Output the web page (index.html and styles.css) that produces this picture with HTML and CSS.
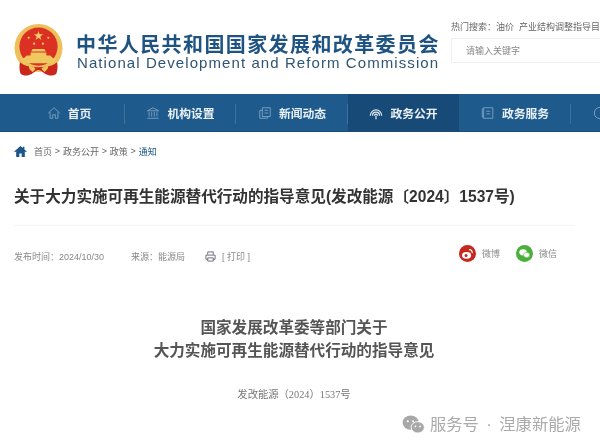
FILE: index.html
```html
<!DOCTYPE html>
<html lang="zh">
<head>
<meta charset="utf-8">
<title>关于大力实施可再生能源替代行动的指导意见</title>
<link rel="stylesheet" href="styles.css">
</head>
<body>
<div class="page">
	<header class="top">
		<svg class="emblem" viewBox="0 0 50 54">
			<circle cx="25" cy="24.500" r="24.500" fill="#edc05c"/>
			<circle cx="25" cy="23" r="19.500" fill="#db3022"/>
			<polygon points="25,7 26.100,10.500 29.800,10.500 26.800,12.700 27.900,16.200 25,14.100 22.100,16.200 23.200,12.700 20.200,10.500 23.900,10.500" fill="#f3cf6b"/>
			<circle cx="15" cy="14" r="1.100" fill="#f3cf6b"/>
			<circle cx="35" cy="14" r="1.100" fill="#f3cf6b"/>
			<circle cx="20.500" cy="20" r="1.100" fill="#f3cf6b"/>
			<circle cx="29.500" cy="20" r="1.100" fill="#f3cf6b"/>
			<path d="M19 25.500h12l1.500 2.500h-15zM17 29h16v3H17zM13 32h24l3 3H10zM7 35h36l-2 5H9z" fill="#f0c860"/>
			<path d="M6 39c-1 6 0 10 1 12 5 3 8 1 11 0 3-2 5-4 7-4s4 2 7 4c3 1 6 3 11 0 1-2 2-6 1-12-4 3-7 5-19 5S10 42 6 39z" fill="#c9271c"/>
			<path d="M15 42c3 2 6 1 7 4l-3 3c-2-2-4-3-4-7zM35 42c-3 2-6 1-7 4l3 3c2-2 4-3 4-7z" fill="#efc35c"/>
		</svg>
		<div class="brand">
			<div class="brand-cn">中华人民共和国国家发展和改革委员会</div>
			<div class="brand-en">National Development and Reform Commission</div>
		</div>
		<div class="search">
			<div class="hot">热门搜索：油价&nbsp; 产业结构调整指导目</div>
			<div class="search-box">请输入关键字</div>
		</div>
	</header>

	<nav class="nav">
		<a class="nav-item home">
			<svg viewBox="0 0 16 16"><path d="M1.500 8 8 2l6.500 6M3.500 7v7h3v-4h3v4h3V7"/></svg>首页
		</a>
		<a class="nav-item org">
			<svg viewBox="0 0 16 16"><path d="M1.500 5.500 8 2l6.500 3.500zM3.500 7v5M6.500 7v5M9.500 7v5M12.500 7v5M1.500 14h13"/></svg>机构设置
		</a>
		<a class="nav-item news">
			<svg viewBox="0 0 16 16"><path d="M5 2h9v10H5zM5 5H2v9h9v-2M7.500 5h4M7.500 8h4"/></svg>新闻动态
		</a>
		<a class="nav-item open active">
			<svg viewBox="0 0 16 16"><path d="M1.500 11a6.500 6.500 0 1 1 13 0M4 11a4 4 0 1 1 8 0M6.300 11a1.700 1.700 0 1 1 3.400 0M8 11v4"/></svg>政务公开
		</a>
		<a class="nav-item service">
			<svg viewBox="0 0 16 16"><path d="M3 2h10.500v12H3zM3 2 1.500 3.500v9L3 14M6 6h4.500M6 9h4.500"/></svg>政务服务
		</a>
		<a class="nav-item last">
			<svg viewBox="0 0 16 16"><circle cx="8" cy="8" r="6.500"/></svg>
		</a>
	</nav>

	<div class="crumbs">
		<svg class="crumb-home" viewBox="0 0 16 14"><path d="M8 0 0 7l1 1 1.500-1.300V14h4V9.500h3V14h4V6.700L15 8l1-1-3-2.600V1h-2v1.600z"/></svg>
		<span>首页</span><i>&gt;</i><span>政务公开</span><i>&gt;</i><span>政策</span><i>&gt;</i><span class="here">通知</span>
	</div>

	<h1 class="headline">关于大力实施可再生能源替代行动的指导意见(发改能源〔2024〕1537号)</h1>

	<div class="meta">
		<span class="date">发布时间：2024/10/30</span>
		<span class="source">来源：能源局</span>
		<span class="print">
			<svg viewBox="0 0 12 12"><path d="M3 4V1h6v3M1 9V4.500h10V9H9M3 7.500h6V11H3zM1 9h2"/></svg>
			[ 打印 ]
		</span>
		<span class="share">
			<span class="share-item">
				<svg class="round weibo" viewBox="0 0 18 18"><circle cx="9" cy="9" r="9"/><ellipse cx="8" cy="11" rx="4.800" ry="3.500" fill="#fff"/><circle cx="7.500" cy="11" r="1.600"/><path d="M10.500 5a3 3 0 0 1 3.500 3.500" fill="none" stroke="#fff" stroke-width="1.200"/></svg>微博
			</span>
			<span class="share-item">
				<svg class="round wechat" viewBox="0 0 18 18"><circle cx="9" cy="9" r="9"/><ellipse cx="7.500" cy="7.800" rx="4" ry="3.300" fill="#fff"/><ellipse cx="11.300" cy="10.500" rx="3.300" ry="2.700" fill="#fff" stroke="#4cae3c" stroke-width=".6"/></svg>微信
			</span>
		</span>
	</div>

	<article class="doc">
		<h2>国家发展改革委等部门关于<br>大力实施可再生能源替代行动的指导意见</h2>
		<p class="doc-no">发改能源（2024）1537号</p>
	</article>

	<div class="mark">
		<svg viewBox="0 0 24 20"><ellipse cx="9" cy="8" rx="8.500" ry="7.500"/><ellipse cx="16.500" cy="13" rx="7" ry="6" stroke="#fff"/><circle cx="6" cy="6.500" r="1.100" fill="#fff"/><circle cx="11.500" cy="6.500" r="1.100" fill="#fff"/><circle cx="14" cy="12" r=".9" fill="#fff"/><circle cx="19" cy="12" r=".9" fill="#fff"/></svg>
		<span class="mark-text">服务号 · 涅康新能源</span>
	</div>
</div>
</body>
</html>
```

FILE: styles.css
```css
html,body{
	margin:0;
	padding:0;
	background:#fff;
	overflow:hidden;
}
body{
	font-family:"Liberation Sans", "Noto Sans CJK SC", sans-serif;
	color:#333;
}
.page{
	position:relative;
	width:600px;
	height:448px;
	overflow:hidden;
	filter:blur(.4px);
}
.top{
	display:flex;
	height:94px;
	padding-left:14px;
}
.emblem{
	width:49px;
	height:53px;
	margin-top:24px;
	flex:none;
}
.brand{
	width:364px;
	margin:35px 0 0 13px;
	flex:none;
}
.brand-cn{
	font-size:20px;
	line-height:20px;
	letter-spacing:1.400px;
	font-weight:bold;
	color:#1f5482;
	white-space:nowrap;
}
.brand-en{
	font-size:15px;
	line-height:12px;
	letter-spacing:1.080px;
	margin-top:2px;
	margin-left:1px;
	color:#2f5474;
	white-space:nowrap;
}
.search{
	margin:20px 0 0 11px;
	flex:none;
	width:149px;
}
.hot{
	font-size:9px;
	line-height:14px;
	color:#666;
	white-space:nowrap;
}
.search-box{
	margin-top:4px;
	height:25px;
	line-height:25px;
	padding-left:14px;
	border:1px solid #eee;
	border-right:0;
	border-radius:2px 0 0 2px;
	box-sizing:border-box;
	font-size:9px;
	color:#888;
}
.nav{
	display:flex;
	height:38px;
	background:#1f5a8c;
	border-bottom:1px solid #1a4c78;
	box-sizing:border-box;
}
.nav-item{
	display:flex;
	align-items:center;
	justify-content:center;
	gap:7px;
	flex:none;
	width:111px;
	height:100%;
	font-size:11.800px;
	font-weight:bold;
	color:#e9f0f6;
	position:relative;
}
.nav-item svg{
	width:14px;
	height:14px;
	fill:none;
	stroke:#7fa6c8;
	stroke-width:1;
}
.nav-item::after{
	content:"";
	position:absolute;
	right:0;
	top:10px;
	height:20px;
	width:1px;
	background:#3f719c;
}
.home{
	width:125px;
	padding-left:13px;
	box-sizing:border-box;
}
.news{
	width:112px;
}
.active{
	background:#174a77;
}
.active svg{
	stroke:#dfe8ef;
	stroke-width:1.400;
}
.active::after{
	display:none;
}
.service{
	width:112px;
}
.last{
	width:29px;
	justify-content:flex-start;
	padding-left:22px;
}
.last::after{
	display:none;
}
.crumbs{
	display:flex;
	align-items:center;
	height:14px;
	margin:12px 0 0 14px;
	font-size:9px;
	color:#666;
}
.crumb-home{
	width:13px;
	height:11px;
	fill:#1c5587;
	margin-right:7px;
}
.crumbs i{
	font-style:normal;
	margin:0 2.800px;
}
.crumbs .here{
	color:#1c5587;
}
.headline{
	width:561px;
	margin:29px 0 0 14px;
	padding-bottom:18px;
	border-bottom:1px solid #f4f4f4;
	font-size:15.600px;
	line-height:20px;
	color:#333;
	white-space:nowrap;
}
.meta{
	display:flex;
	align-items:center;
	height:20px;
	margin:20px 0 0 14px;
	font-size:9px;
	color:#888;
}
.date{
	width:117px;
}
.source{
	width:74px;
}
.print{
	display:flex;
	align-items:center;
	gap:6px;
}
.print svg{
	width:11px;
	height:11px;
	fill:none;
	stroke:#667;
	stroke-width:1;
}
.share{
	display:flex;
	gap:16px;
	margin-left:auto;
	margin-right:43px;
	margin-top:-5px;
}
.share-item{
	display:flex;
	align-items:center;
	gap:6px;
}
.round{
	width:17px;
	height:17px;
}
.weibo{
	fill:#c6281d;
}
.wechat{
	fill:#4cae3c;
}
.doc{
	margin:50px 12px 0 0;
	text-align:center;
}
.doc h2{
	margin:0;
	font-size:15.600px;
	line-height:23px;
	font-weight:bold;
	color:#555;
}
.doc-no{
	margin:25px 0 0;
	font-family:"Liberation Serif", "Noto Sans CJK SC", serif;
	font-size:10.300px;
	line-height:16px;
	color:#777;
}
.mark{
	position:absolute;
	left:402px;
	top:414px;
	display:flex;
	align-items:center;
	gap:5px;
	font-size:16.300px;
	line-height:20px;
	color:#aaa;
	white-space:nowrap;
}
.mark-text{
	word-spacing:3px;
}
.mark svg{
	width:23px;
	height:19px;
	fill:#a8a8a8;
}
```
